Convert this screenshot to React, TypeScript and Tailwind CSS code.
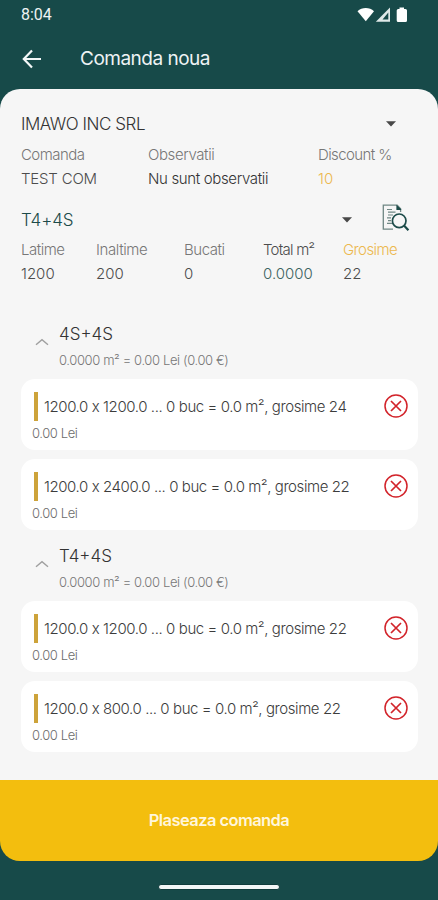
import React from 'react';

type Item = { text: string; cls: string };
type Group = { title: string; items: Item[] };

const groups: Group[] = [
  {
    title: '4S+4S',
    items: [
      { text: '1200.0 x 1200.0 ... 0 buc = 0.0 m², grosime 24', cls: 'tracking-[-0.41px]' },
      { text: '1200.0 x 2400.0 ... 0 buc = 0.0 m², grosime 22', cls: 'tracking-[-0.42px]' },
    ],
  },
  {
    title: 'T4+4S',
    items: [
      { text: '1200.0 x 1200.0 ... 0 buc = 0.0 m², grosime 22', cls: 'tracking-[-0.41px]' },
      { text: '1200.0 x 800.0 ... 0 buc = 0.0 m², grosime 22', cls: 'tracking-[-0.42px]' },
    ],
  },
];

function Caret() {
  return (
    <svg width="10" height="6" viewBox="0 0 10 6" className="block">
      <path d="M0 0.3H10L5 5.5Z" fill="#484848" />
    </svg>
  );
}

function Chevron() {
  return (
    <svg width="14" height="8" viewBox="0 0 14 8" fill="none" className="mt-[30px] block">
      <path d="M1 6.8L7 1.6L13 6.8" stroke="#a0a0a0" strokeWidth="1.4" />
    </svg>
  );
}

function DeleteIcon() {
  return (
    <svg width="24" height="24" viewBox="0 0 24 24" fill="none" className="-mt-[1px] block" stroke="#d2232a">
      <circle cx="12" cy="12" r="11" strokeWidth="1.5" />
      <path d="M7 7L17 17M17 7L7 17" strokeWidth="1.7" />
    </svg>
  );
}

function DocSearch() {
  return (
    <svg width="28" height="28" viewBox="0 0 28 28" fill="none" className="block">
      <path d="M11 25.2H1.3V1.2H15.2L18.6 4.8V8" stroke="#6f8784" strokeWidth="1.3" />
      <path d="M14.4 0.8L19.2 5.2V6H14.4Z" fill="#1c4b49" />
      <path d="M5 5.5H10M6 8.2H13.5M6 11H11M5 13.8H9M6 16.6H9M5 19.4H10" stroke="#6f8784" strokeWidth="1.2" />
      <circle cx="17.2" cy="16.8" r="6.8" stroke="#1c4b49" strokeWidth="1.7" />
      <path d="M22 21.6L26.4 26.2" stroke="#1c4b49" strokeWidth="2.2" />
    </svg>
  );
}

export default function App() {
  return (
    <div className="flex h-[900px] w-[438px] flex-col overflow-hidden whitespace-nowrap bg-[#174a49] font-['Inter','Liberation_Sans',sans-serif] font-light">
      <header className="h-[89px] text-[#eef3f4]">
        <div className="flex h-[29px] items-center justify-between pl-[21px] pr-[30px]">
          <span className="font-['Roboto',sans-serif] text-[16px] font-normal">8:04</span>
          <svg width="51" height="16" viewBox="0 0 51 16" className="block" fill="#ffffff">
            <path d="M0.5 4.2C5 0 12.500 0 17 4.200L8.800 14.200Z" />
            <path d="M18.800 14.800L33 0.500V14.800Z" fill="#dfe9e8" />
            <path d="M25.500 12.500L31.300 5.500V12.500Z" fill="#174a49" />
            <path d="M42.500 0.500H47V2H48.500Q50 2 50 3.500V13.500Q50 15 48.500 15H41.200Q39.700 15 39.700 13.500V3.500Q39.700 2 41.200 2H42.500Z" />
          </svg>
        </div>
        <div className="flex h-[60px] items-center pl-[22px]">
          <svg width="20" height="20" viewBox="0 0 20 20" fill="none" className="block">
            <path d="M19 10H2M10 1.500L1.800 10L10 18.500" stroke="#f4f8f8" strokeWidth="2.2" />
          </svg>
          <h1 className="ml-[38px] text-[19px] font-normal tracking-[-0.5px]">Comanda noua</h1>
        </div>
      </header>

      <main className="h-[691px] rounded-t-[20px] bg-[#f6f6f6] px-[21px] pt-[23px] text-[15px] leading-6 text-[#4c4c4c]">
        <div className="flex h-6 items-center justify-between pr-[21px]">
          <span className="text-[17px] tracking-[-0.46px] text-[#333333]">IMAWO INC SRL</span>
          <Caret />
        </div>
        <div className="mt-[7px] grid grid-cols-[127px_170px_auto]">
          <span className="tracking-[-0.55px] text-[#777777]">Comanda</span>
          <span className="tracking-[-0.4px] text-[#777777]">Observatii</span>
          <span className="tracking-[-0.6px] text-[#777777]">Discount %</span>
          <span className="tracking-[-0.2px]">TEST COM</span>
          <span className="tracking-[-0.35px] text-[#333333]">Nu sunt observatii</span>
          <span className="text-[#ecb84e]">10</span>
        </div>
        <div className="mt-[17px] flex h-6 items-center">
          <span className="w-[321px] text-[17px] tracking-[-0.1px] text-[#1c4b49]">T4+4S</span>
          <Caret />
          <div className="ml-[30px] -mt-[4px]">
            <DocSearch />
          </div>
        </div>
        <div className="mt-[6px] grid grid-cols-[75px_88px_79px_80px_auto]">
          <span className="tracking-[-0.5px] text-[#777777]">Latime</span>
          <span className="tracking-[-0.4px] text-[#777777]">Inaltime</span>
          <span className="tracking-[-0.45px] text-[#777777]">Bucati</span>
          <span className="tracking-[-0.75px]">Total m²</span>
          <span className="tracking-[-0.6px] text-[#ecb84e]">Grosime</span>
          <span>1200</span>
          <span>200</span>
          <span>0</span>
          <span className="text-[#3c6361]">0.0000</span>
          <span>22</span>
        </div>

        <div className="mt-[22px]">
          {groups.map((group) => (
            <section key={group.title}>
              <div className="flex h-[71px] pl-[14px]">
                <Chevron />
                <div className="ml-[10px] pt-[14px]">
                  <div className="text-[17px] text-[#333333]">{group.title}</div>
                  <div className="mt-[2px] text-[13px] tracking-[-0.38px] text-[#777777]">0.0000 m² = 0.00 Lei (0.00 €)</div>
                </div>
              </div>
              <div className="flex w-[397px] flex-col gap-[9px]">
                {group.items.map((item) => (
                  <div key={item.text} className="h-[71px] rounded-[14px] bg-white pl-[11px] pr-[10px] pt-[13px]">
                    <div className="flex h-[29px] items-center">
                      <span className="ml-[2px] h-[29px] w-[4px] bg-[#cda33a]" />
                      <span className={`ml-[6px] flex-1 text-[15px] text-[#3c3c3c] ${item.cls}`}>{item.text}</span>
                      <DeleteIcon />
                    </div>
                    <div className="text-[13px] tracking-[-0.4px] text-[#6c6c6c]">0.00 Lei</div>
                  </div>
                ))}
              </div>
            </section>
          ))}
        </div>
      </main>

      <button className="h-[81px] rounded-b-[20px] bg-[#f3be0e] text-[16.5px] font-semibold tracking-[-0.58px] text-[#fff6dc]">
        Plaseaza comanda
      </button>
      <div className="mx-auto mt-[23px] h-[6px] w-[122px] rounded-full border border-[#0f3b3b] bg-[#f2f6f6]" />
    </div>
  );
}
